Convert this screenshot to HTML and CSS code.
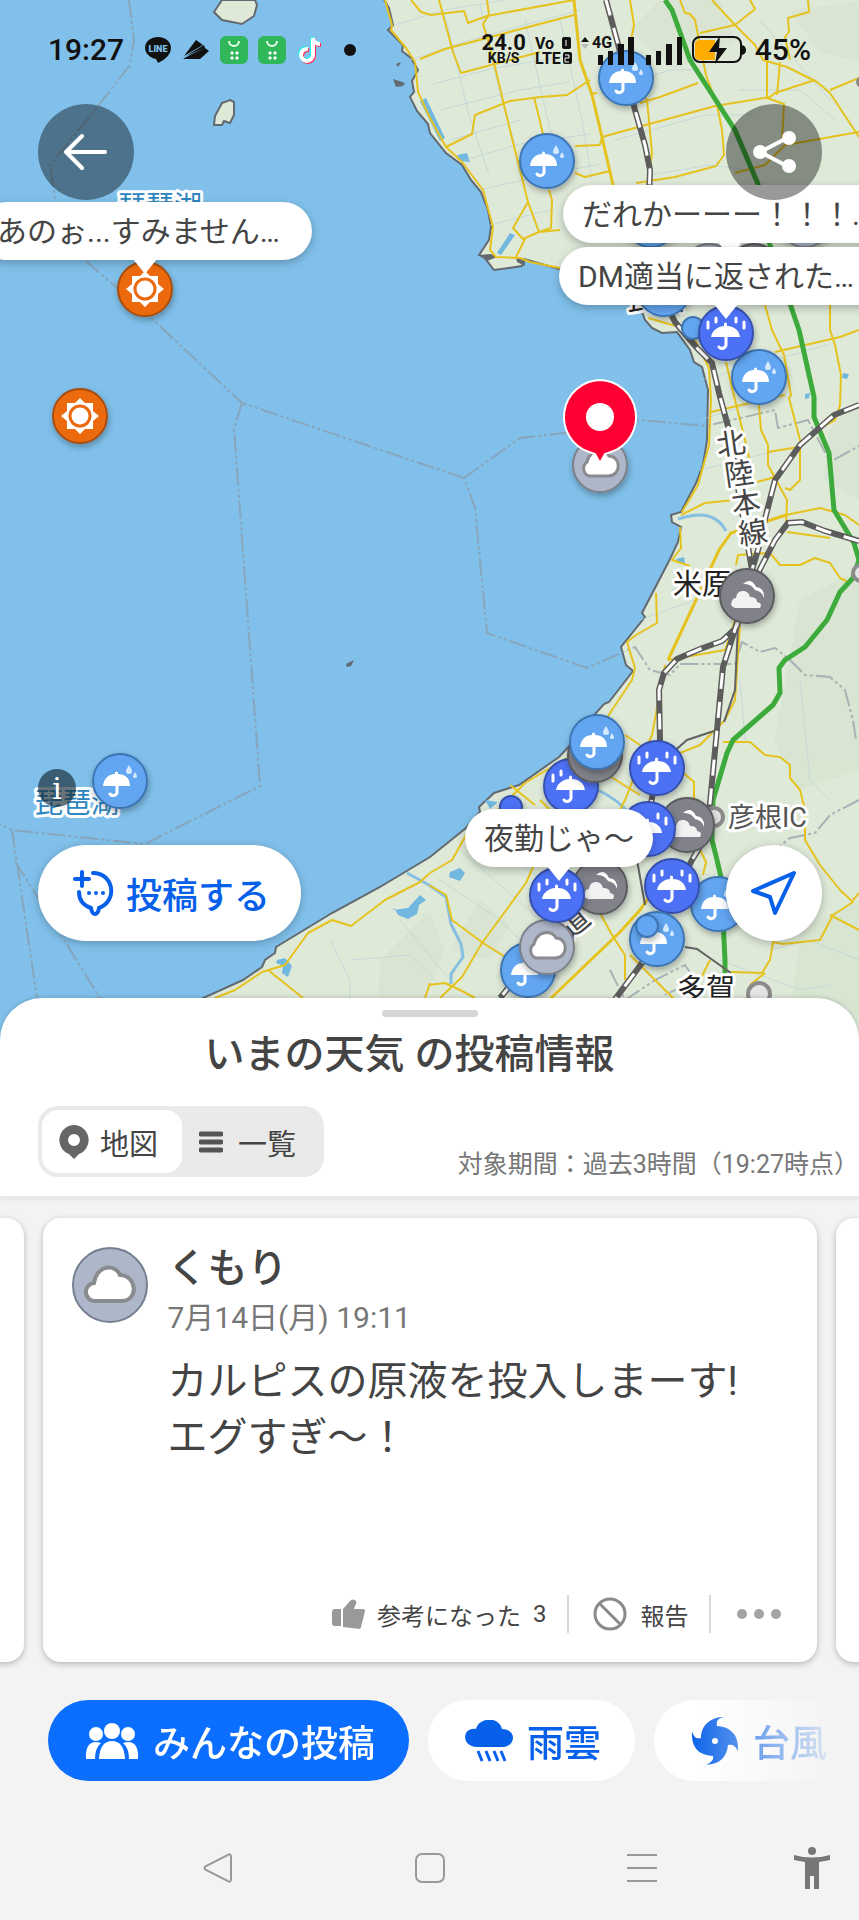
FILE: index.html
```html
<!DOCTYPE html>
<html lang="ja">
<head>
    <meta charset="UTF-8">
    <meta name="viewport" content="width=device-width, initial-scale=1.0">
    <title>いまの天気 の投稿情報</title>
    <link rel="stylesheet" href="styles.css">
</head>

<body>
    <div class="map">
        <svg class="map-canvas" viewBox="0 0 859 1040" preserveAspectRatio="xMidYMin slice" role="img" aria-label="琵琶湖周辺の地図">
            <defs>
                <symbol id="umbrella" viewBox="-29 -29 58 58" overflow="visible">
                    <path d="M-17 5C-16 -3 -11 -7 -5 -7V-8a1.500 1.500 0 0 1 3 0v1C5 -7 10 -3 10 5Z" fill="#fff"/>
                    <path d="M-3 3V12a4 4 0 0 1-7 1" fill="none" stroke="#fff" stroke-width="3" stroke-linecap="round"/>
                    <path d="M9-16q-6 9 0 9t0-9ZM15-9q-4 6 0 6t0-6Z" fill="#d3e9ff"/>
                </symbol>
                <symbol id="heavy" viewBox="-29 -29 58 58" overflow="visible">
                    <path d="M-15 4C-14 -3 -7 -7 -2 -7V-9a1.500 1.500 0 0 1 3 0v2C8 -7 13 -3 14 4Z" fill="#fff"/>
                    <path d="M0 2V12a4 4 0 0 1-7 2M-18-11v6M-10-15v4M10-15v4M18-11v6" fill="none" stroke="#fff" stroke-width="3" stroke-linecap="round"/>
                </symbol>
                <symbol id="cloud" viewBox="-29 -29 58 58" overflow="visible">
                    <path d="M-11 11a8 8 0 0 1-2-14C-10-17 6-17 9-9c12 0 13 20-1 20Z" fill="#fff" stroke="#8a8b8f" stroke-width="3"/>
                </symbol>
                <symbol id="clouds" viewBox="-29 -29 58 58" overflow="visible">
                    <path d="M-4-12Q4-19 9-9Q18-8 17 2Q15-5 8-6Q4-13-4-12Z" fill="#fff"/>
                    <path d="M-12 12q-6-2-3-7q1-3 4-3q1-8 8-7q5 1 6 6q7 0 7 5q6 1 3 6Z" fill="#f2f2f2"/>
                </symbol>
                <symbol id="sun" viewBox="-29 -29 58 58" overflow="visible">
                    <path d="M0-18l5 5h8v8l6 5-6 5v8H5l-5 5-5-5h-8V5l-6-5 6-5v-8h8Z" fill="#fff"/>
                    <circle r="10" fill="#fff" stroke="#ec6b10" stroke-width="3"/>
                </symbol>
                <filter id="shadow" x="-30%" y="-30%" width="160%" height="160%">
                    <feDropShadow dx="1" dy="3" stdDeviation="3" flood-opacity=".3"/>
                </filter>
                <path id="coast" d="M382-4L389 8 393 25 388 30 403 45 402 51 411 58 418 70 412 81 414 92 410 97 417 111 428 124 430 133 446 153 462 165 471 180 481 192 488 210 491 227 489 240 479 255 484 257 494 270 509 268 522 266 524 259 559 269 600 285 640 306 645 320 652 328 662 333 677 332 690 350 694 362 702 367 708 390 707 440 703 465 696 483 681 512 671 515 672 522 681 527 678 542 670 559 642 613 645 617 621 647 626 665 633 671 609 702 604 704 596 713 575 740 559 757 519 785 494 793 479 807 480 812 466 828 430 857 380 887 332 913 276 947 275 953 265 960 262 967 243 980 203 998 150 1044 863 1044 863-4Z"/>
                <path id="rail-main" d="M606 0L618 44 635 110 645 145 650 170 649 200M664 300L675 322 696 347 712 363 719 393 729 430 740 500 752 570"/>
                <path id="rail-hikone" d="M748 590L737 623 723 667 710 803 704 840 692 860 642 963 616 998 590 1040M742 612L736 628 722 641 700 649 677 659 664 673 659 690 660 740 657 768 650 810 600 890 560 925 500 998"/>
                <path id="rail-tokai" d="M859 405L834 415 800 445 775 480 766 515 758 550 752 570M859 541L825 531 802 522 788 523 775 540 757 575"/>
            </defs>

            <rect width="859" height="1040" fill="#80c0ea"/>
            <use href="#coast" fill="#dee9d8" stroke="#626970" stroke-width="2"/>
            <g fill="#d4e2cc" opacity=".5">
                <path d="M630 30l30-30h60l15 40-60 30ZM790 10l69-8v60l-40-10ZM830 430l29-30v100l-35-20ZM800 600l59-30v200l-60 20-25-50 12-60Z"/>
                <path d="M380 960l50-50 14 40-20 50-46 20ZM480 900l30 25-20 35-40-10ZM800 930l59-30v130h-70Z"/>
            </g>
            <g fill="#dee9d8" stroke="#626970" stroke-width="2">
                <path d="M222 0l-8 12 8 8 20 4 12-8 3-11-2-5ZM230 100l4 2v13l-4 8-6-2-2 4h-8l1-9 7-13Z"/>
            </g>
            <path d="M396 64l5-2-3 5ZM393 79l12 4-2 3-7 1ZM346 664l8-4-3 6-4 1ZM479 255l12-1 6 3-10 4ZM516 257l9 2 0 7-8-4Z" fill="#626970"/>

            <!-- ponds and rivers -->
            <path d="M420 101l6-3 19 40-5 3ZM457 155l10-2 3 9-9-1ZM497 253l13-20 5 2-14 20ZM393 910l15-2 12-13 6 5-7 5-2 9-9 5-10-4-4-7ZM277 960l8-2 7 8-4 11-6-4 1-7-7-3ZM450 872l10-4 5 5-5 8-11-4ZM843 373l6 1-2 5-5-1ZM805 394l5-1-1 5-4 1ZM676 559l8-2 1 6-7-1ZM485 800l13 2-8 7Z" fill="#72b7e0"/>
            <g fill="none" stroke="#86bfe0" stroke-width="3">
                <path d="M678 519q22-7 33-2 10 4 15 14M429 885l17 12 5 27 10 20 2 13-12 17v10M407 873l22 12M598 790q20 10 30 22"/>
            </g>
            <g fill="none" stroke="#b6cfda" stroke-width="1" opacity=".6">
                <path d="M395 25l50-15 60-10M410 60l60-20 110-30M430 85l60-16 80-14M440 110l80-20 50-8M450 140l70-20M465 160l55-16 70-10M480 190l60-14 60-12M490 225l60-15M445 15l24 100 20 60M480 5l20 90 15 50M525 20l25 110 12 60M560 20l22 100 10 60M610 90l60-20 30 0M615 140l90-25 50 0M650 175l60-10 40 5M740 90l60 0 35 30M760 20l70 80M700 380l60-16 70-20M700 420l70-22M700 470l80-20M670 590l60-10M640 620l55-20 30-10M570 760l80 40M540 800l60 30M440 880l60 40 60 60M400 920l50 60M350 960l60-5 30 30M330 940l20 40v30M460 850l80 70M470 830l80 55M700 870l60 40M770 950l40-10 49 20M720 960l80 30 30-5M800 680l10 100 20 20M740 680l5 60"/>
            </g>
            <g fill="none" stroke="#8a97a4" stroke-width="2" stroke-dasharray="18 3 3 3 3 3" opacity=".65">
                <path d="M129 0L134 40 130 65 95 110 50 165 55 200 87 262 145 312 182 347 242 403 464 478 475 508 487 633 587 668 635 647 650 670 670 675 680 664 735 664 742 642 760 652 775 648 790 660 805 675 830 677 845 690 853 720 856 740M242 403L234 428 260 786 145 844 12 830 0 824M12 830L37 998M15 861L100 998M464 478L520 438 590 430 640 420 706 426 775 410 778 428 808 420 830 462 859 446M859 800L830 815 815 833 790 838 775 850M610 970l15 30 30-20 30-15 10 15-30 15"/>
            </g>

            <!-- prefectural roads -->
            <g fill="none" stroke="#e6c21f" stroke-width="2" stroke-linejoin="round">
                <path d="M385 0L392 25 391 30 406 48 415 62 418 92 430 118 446 147 462 162 483 190 493 227 490 250 496 257 520 258 530 262 560 268M648 318L690 330 700 350 709 368 711 400 709 445 698 485 682 512M680 527L681 548 672 560 690 566M656 593L657 623 636 635 627 642 635 668 632 680 612 710 590 745 560 762 525 783 500 808 470 828 452 860 430 873"/>
                <path d="M411 0L421 12 431 15 464 11 468 23 487 16 574 0M439 0L453 52 461 73 540 52M487 0L489 15 483 24 488 40 495 67 510 130 528 202 539 232M420 59L445 49 574 15M446 147L472 134 475 115 510 101 540 97 567 95 590 80M534 97L543 134M549 190L552 200 551 228 539 232 523 239 513 228 528 202M602 137L715 106 770 97 775 93 815 80M590 94L597 93M575 146L600 145M575 173L585 177 610 171M525 239L516 257M539 232L560 230"/>
                <path d="M630 0L634 25 629 50 632 80 647 100 652 153 647 185M640 103L660 97 698 83M600 145l2-8M636 183L675 177 716 166 724 155 722 130 717 105 706 75 695 20 690 14 685 13 680 0M735 173L765 165 785 145 859 132M700 33L735 25 755 9 750 0M735 25L712 0M735 25L755 45 763 60 787 67 817 82 830 93 859 137M808 0L809 12 788 18 789 32 785 37 790 60M767 60L767 98 784 104 782 140M780 62L777 95M830 90L859 78"/>
                <path d="M711 412L785 395M772 330L784 355 791 395 789 398 800 440 800 480 790 490 785 488M726 362L735 400 745 440 755 485M775 352L840 337 859 330M830 305L830 330 835 345 841 375 840 405 835 420 820 428M759 405L761 430 768 445 768 465 787 500 786 525M768 452L799 447M757 482L775 477M681 515L705 503 735 500M786 515L820 508 845 515 859 525M787 532L830 538M736 565L738 555 770 553 780 565 800 565 815 558 830 563 840 578 848 582M765 305l7 25"/>
                <path d="M668 660L725 650 735 620M665 665L652 735 645 750 625 800 600 850M740 625L735 700 725 720 700 745 650 765M723 742L750 742 765 755 780 757 790 765 790 778 800 790 805 810 805 840 820 865 840 890 853 902 833 915 820 940 783 944 773 942 770 960 762 973 731 972M853 900L859 893M830 915L859 930M680 770L694 782 694 810M700 850L706 862 703 875M625 735L640 745M600 770L640 795M510 785L535 805M530 815L520 845M540 800L560 820M536 860L526 883 482 943 462 977 440 998M429 885L446 895 452 920 483 943 510 960M429 985L445 983 460 990 475 998M600 913L612 935 625 955 625 980M630 955L675 1000M765 973L750 985M710 960L700 980"/>
                <path d="M215 998L235 990 262 972 285 965 308 933 332 920 351 926 385 900 420 882 430 873M268 970L303 998M430 983L425 998"/>
            </g>
            <g fill="none" stroke="#e6c21f" stroke-width="3">
                <path d="M574 0L580 60 592 95 602 137 613 185M786 515L731 533 719 550 696 600 668 660M675 860L640 910 620 932 549 1000"/>
            </g>

            <!-- expressway -->
            <path d="M665 0L672 10 690 60 735 130 758 184 770 245 799 330 814 397 814 417 829 453 834 510 854 543 859 560 853 578 840 592 827 620 805 647 785 660 779 668 780 693 773 705 733 740 727 753 713 800 712 840 717 860 721 877 725 960 725 990" fill="none" stroke="#3cab3c" stroke-width="5" stroke-linejoin="round"/>
            <path d="M738 625L735 690 724 722M714 731L687 740 670 755M637 860L645 905M685 947L697 949 731 973" fill="none" stroke="#626262" stroke-width="2"/>

            <g fill="none" stroke="#5c5c5c" stroke-width="6">
                <use href="#rail-main"/><use href="#rail-hikone"/><use href="#rail-tokai"/>
            </g>
            <g fill="none" stroke="#fff" stroke-width="3" stroke-dasharray="16 13">
                <use href="#rail-main"/><use href="#rail-hikone"/><use href="#rail-tokai"/>
            </g>

            <g fill="#e4e4e4" stroke="#8b8b8b" stroke-width="4">
                <circle cx="714" cy="817" r="9"/><circle cx="759" cy="994" r="11"/><circle cx="861" cy="573" r="8"/><circle cx="862" cy="82" r="4"/>
            </g>

            <g class="place">
                <text x="673" y="595">米原</text>
                <text x="677" y="1000">多賀</text>
                <text x="626" y="310">長浜</text>
                <text class="place-ic" x="728" y="827">彦根IC</text>
                <text class="place-line" transform="translate(718 456) rotate(-8)">北</text>
                <text class="place-line" transform="translate(726 486) rotate(-8)">陸</text>
                <text class="place-line" transform="translate(733 515) rotate(-8)">本</text>
                <text class="place-line" transform="translate(740 545) rotate(-8)">線</text>
                <text class="place-line" transform="translate(570 940) rotate(-40)">道</text>
                <text class="place-lake" x="118" y="216">琵琶湖</text>
                <text class="place-lake" x="35" y="813">琵琶湖</text>
            </g>

            <!-- weather reports -->
            <g class="pins">
                <g class="pin sunny" transform="translate(145 289)"><circle r="27"/><use href="#sun" x="-29" y="-29" width="58" height="58"/></g>
                <g class="pin sunny" transform="translate(80 416)"><circle r="27"/><use href="#sun" x="-29" y="-29" width="58" height="58"/></g>
                <g class="pin rainy" transform="translate(626 78)"><circle r="27"/><use href="#umbrella" x="-29" y="-29" width="58" height="58"/></g>
                <g class="pin rainy" transform="translate(547 161)"><circle r="27"/><use href="#umbrella" x="-29" y="-29" width="58" height="58"/></g>
                <g class="pin rainy" transform="translate(651 220)"><circle r="27"/></g>
                <g class="pin cloudy" transform="translate(805 220)"><circle r="27"/></g>
                <g class="pin cloudy" transform="translate(709 271)"><circle r="27"/></g>
                <g class="pin overcast" transform="translate(754 271)"><circle r="27"/></g>
                <g class="pin rainy" transform="translate(664 289)"><circle r="27"/><use href="#umbrella" x="-29" y="-29" width="58" height="58"/></g>
                <g class="pin rainy" transform="translate(693 328)"><circle r="11"/></g>
                <g class="pin rainy" transform="translate(759 377)"><circle r="27"/><use href="#umbrella" x="-29" y="-29" width="58" height="58"/></g>
                <g class="pin storm" transform="translate(726 333)"><circle r="27"/><use href="#heavy" x="-29" y="-29" width="58" height="58"/></g>
                <g class="pin cloudy" transform="translate(600 465)"><circle r="27"/><use href="#cloud" x="-29" y="-29" width="58" height="58"/></g>
                <g class="pin overcast" transform="translate(747 596)"><circle r="27"/><use href="#clouds" x="-29" y="-29" width="58" height="58"/></g>
                <g class="pin rainy" transform="translate(120 781)"><circle r="27"/><use href="#umbrella" x="-29" y="-29" width="58" height="58"/></g>
                <g class="pin storm" transform="translate(571 786)"><circle r="27"/><use href="#heavy" x="-29" y="-29" width="58" height="58"/></g>
                <g class="pin overcast" transform="translate(595 755)"><circle r="27"/></g>
                <g class="pin rainy" transform="translate(597 742)"><circle r="27"/><use href="#umbrella" x="-29" y="-29" width="58" height="58"/></g>
                <g class="pin storm" transform="translate(657 768)"><circle r="27"/><use href="#heavy" x="-29" y="-29" width="58" height="58"/></g>
                <g class="pin storm" transform="translate(511 807)"><circle r="11"/></g>
                <g class="pin overcast" transform="translate(687 825)"><circle r="27"/><use href="#clouds" x="-29" y="-29" width="58" height="58"/></g>
                <g class="pin storm" transform="translate(648 829)"><circle r="27"/><use href="#heavy" x="-29" y="-29" width="58" height="58"/></g>
                <g class="pin overcast" transform="translate(600 887)"><circle r="27"/><use href="#clouds" x="-29" y="-29" width="58" height="58"/></g>
                <g class="pin rainy" transform="translate(528 970)"><circle r="27"/><use href="#umbrella" x="-29" y="-29" width="58" height="58"/></g>
                <g class="pin cloudy" transform="translate(547 947)"><circle r="27"/><use href="#cloud" x="-29" y="-29" width="58" height="58"/></g>
                <g class="pin storm" transform="translate(557 895)"><circle r="27"/><use href="#heavy" x="-29" y="-29" width="58" height="58"/></g>
                <g class="pin rainy" transform="translate(718 904)"><circle r="27"/><use href="#umbrella" x="-29" y="-29" width="58" height="58"/></g>
                <g class="pin storm" transform="translate(672 886)"><circle r="27"/><use href="#heavy" x="-29" y="-29" width="58" height="58"/></g>
                <g class="pin rainy" transform="translate(657 939)"><circle r="27"/><use href="#umbrella" x="-29" y="-29" width="58" height="58"/></g>
                <g class="pin rainy" transform="translate(647 926)"><circle r="11"/></g>
            </g>

            <!-- selected point -->
            <path d="M600 380a37 37 0 0 1 11 72l-6 2-5 9-5-9-6-2a37 37 0 0 1 11-72Z" fill="#ff0033" stroke="#fff" stroke-width="2"/>
            <circle cx="600" cy="417" r="14" fill="#fff"/>
        </svg>

        <div class="bubble bubble-anoo">あのぉ...すみません…</div>
        <div class="bubble bubble-dareka">だれかーーー！！！...</div>
        <div class="bubble bubble-dm">DM適当に返された…</div>
        <div class="bubble bubble-yakin">夜勤じゃ～</div>

        <div class="status-bar">
            <div class="status-left">
                <span class="clock">19:27</span>
                <svg width="28" height="28" viewBox="0 0 28 28" aria-label="LINE"><path d="M14 1C6 1 1 6 1 12c0 5 5 10 11 11l2 4q13-6 13-15C27 6 22 1 14 1Z" fill="#111"/><text x="14" y="16" class="line-logo">LINE</text></svg>
                <svg width="28" height="28" viewBox="0 0 28 28"><path d="M2 20L14 4l7 5ZM4 20L22 9l1 3ZM1 23L8 19 23 12l4 3-9 8Z" fill="#111"/></svg>
                <svg width="28" height="28" viewBox="0 0 28 28"><rect width="28" height="28" rx="6" fill="#30b75a"/><path d="M9 5a5 5 0 0 0 10 0" fill="none" stroke="#e8ffe9" stroke-width="2"/><path d="M11 16h2v2h-2ZM16 16h2v2h-2ZM11 21h2v2h-2ZM16 21h2v2h-2Z" fill="#fff" stroke="#fff"/></svg>
                <svg width="28" height="28" viewBox="0 0 28 28"><rect width="28" height="28" rx="6" fill="#30b75a"/><path d="M9 5a5 5 0 0 0 10 0" fill="none" stroke="#e8ffe9" stroke-width="2"/><path d="M11 16h2v2h-2ZM16 16h2v2h-2ZM11 21h2v2h-2ZM16 21h2v2h-2Z" fill="#fff" stroke="#fff"/></svg>
                <svg width="28" height="28" viewBox="0 0 28 28" fill="none" stroke-width="4"><path d="M12 13a6 6 0 1 0 5 6V2q1 6 7 6" stroke="#ff2c55" transform="translate(1 1)"/><path d="M12 13a6 6 0 1 0 5 6V2q1 6 7 6" stroke="#25f4ee" transform="translate(-1 -1)"/><path d="M12 13a6 6 0 1 0 5 6V2q1 6 7 6" stroke="#fff"/></svg>
                <span class="more-dot"></span>
            </div>
            <div class="status-right">
                <span class="stack"><b>24.0</b><small>KB/S</small></span>
                <svg width="37" height="30" viewBox="0 0 37 30" class="sim"><text x="0" y="14">Vo</text><text x="0" y="29">LTE</text><rect x="27" y="2" width="9" height="12" rx="2"/><rect x="28" y="17" width="9" height="12" rx="2"/><path d="M31 5v6M30 20h4v3h-4v4h4" fill="none" stroke="#fff"/></svg>
                <svg width="102" height="30" viewBox="0 0 102 30" class="signal"><path d="M0 7l4-5 4 5Z"/><path d="M0 9l4 5 4-5Z" fill="#b5bdb5"/><text x="11" y="13">4G</text><path d="M17 20h5v10h-5ZM27 16h5v14h-5ZM37 9h6v21h-6ZM47 2h6v28h-6ZM65 20h5v10h-5ZM75 16h5v14h-5ZM85 9h6v21h-6ZM96 2h5v28h-5Z"/></svg>
                <svg width="54" height="28" viewBox="0 0 54 28"><rect x="1" y="1" width="48" height="25" rx="7" fill="none" stroke="#111" stroke-width="2"/><path d="M8 4h15v20H8q-5 0-5-4V8q0-4 5-4Z" fill="#ffab00"/><path d="M50 9q4 1 4 5t-4 5ZM28 0L17 16h8l-2 12 12-16h-8Z" fill="#111"/></svg>
                <span class="clock">45%</span>
            </div>
        </div>

        <button class="round-button back" aria-label="戻る"><svg width="44" height="38" viewBox="0 0 44 38"><path d="M41 19H3M18 3L2 19l16 16" fill="none" stroke="#fff" stroke-width="4" stroke-linecap="round" stroke-linejoin="round"/></svg></button>
        <button class="round-button share" aria-label="共有"><svg width="44" height="44" viewBox="0 0 44 44"><path d="M37 7L8 22l29 15" fill="none" stroke="#fff" stroke-width="4"/><g fill="#fff"><circle cx="37" cy="8" r="7"/><circle cx="8" cy="22" r="7"/><circle cx="37" cy="36" r="7"/></g></svg></button>
        <button class="info" aria-label="情報">i</button>
        <div class="map-actions">
            <button class="post-button">
                <svg width="42" height="46" viewBox="0 0 42 46" fill="none" stroke="#0660e9" stroke-width="4" stroke-linecap="round" stroke-linejoin="round"><path d="M9 2v14M2 9h14M20 3c21 0 25 28 6 35q-1 6-4 6t-4-6C9 35 6 29 6 22"/><path d="M16 23h0M23 23h0M30 23h0"/></svg>
                投稿する
            </button>
            <button class="round-button locate" aria-label="現在地"><svg width="46" height="46" viewBox="0 0 46 46"><path d="M43 3L2 21l17 6 5 16Z" fill="none" stroke="#0660e9" stroke-width="4" stroke-linejoin="round"/></svg></button>
        </div>
    </div>

    <div class="sheet">
        <div class="handle"></div>
        <h1>いまの天気 の投稿情報</h1>
        <div class="sheet-tools">
            <div class="switch">
                <button class="active"><svg width="30" height="34" viewBox="0 0 30 34"><path fill-rule="evenodd" d="M15 0a15 15 0 0 1 5 29l-5 5-5-5A15 15 0 0 1 15 0Zm0 9a6 6 0 1 0 0 12 6 6 0 0 0 0-12Z" fill="#666"/></svg>地図</button>
                <button class="list"><svg width="24" height="22" viewBox="0 0 24 22"><path d="M2 3h20M2 11h20M2 19h20" stroke="#555" stroke-width="5" stroke-linecap="round"/></svg>一覧</button>
            </div>
            <p class="period">対象期間：過去3時間（19:27時点）</p>
        </div>
    </div>

    <div class="carousel">
        <div class="card"></div>
        <div class="card">
            <svg class="card-icon" width="76" height="76" viewBox="0 0 76 76"><circle cx="38" cy="38" r="37" fill="#aeb6c9" stroke="#74808f" stroke-width="2"/><path d="M24 54a9 9 0 0 1-2-18C25 17 44 17 48 28c18 1 18 26 2 26Z" fill="#fff" stroke="#8a8b8f" stroke-width="4"/></svg>
            <div class="card-body">
                <h2>くもり</h2>
                <p class="date">7月14日(月) 19:11</p>
                <p class="comment">カルピスの原液を投入しまーす!<br>エグすぎ～！</p>
            </div>
            <div class="card-actions">
                <button class="like"><svg width="33" height="30" viewBox="0 0 33 30" fill="#999"><path d="M3 10h6v17H3q-3 0-3-3V13q0-3 3-3ZM11 10l7-8q3-3 6 0 1 2-1 5l-1 3h9q2 0 2 2l-4 16-1 2-17-2Z"/></svg>参考になった <span>3</span></button>
                <button class="report"><svg width="34" height="34" viewBox="0 0 34 34"><path d="M6 6l22 22" stroke="#8a8a8a" stroke-width="3"/><circle cx="17" cy="17" r="15" fill="none" stroke="#8a8a8a" stroke-width="3"/></svg>報告</button>
                <button class="more" aria-label="その他"><svg width="44" height="10" viewBox="0 0 44 10" fill="#a3a3a3"><circle cx="5" cy="5" r="5"/><circle cx="22" cy="5" r="5"/><circle cx="39" cy="5" r="5"/></svg></button>
            </div>
        </div>
        <div class="card"></div>
    </div>

    <div class="chips">
        <button class="chip selected">
            <svg width="54" height="36" viewBox="0 0 54 36" fill="#fff"><ellipse cx="11" cy="11" rx="7" ry="7"/><ellipse cx="43" cy="11" rx="7" ry="7"/><ellipse cx="27" cy="8" rx="8" ry="8"/><path d="M1 36q-1-16 9-17 3 0 6 1-6 5-6 16ZM53 36q1-16-9-17-3 0-6 1 6 5 6 16ZM14 36q1-18 13-18t13 18Z"/></svg>
            みんなの投稿
        </button>
        <button class="chip">
            <svg width="48" height="42" viewBox="0 0 48 42"><path d="M11 27C-4 26-3 7 11 9 14-3 34-4 37 9c15 0 14 17 1 18Z" fill="#0660e9"/><path d="M13 31l4 10M21 31l4 10M29 31l4 10M36 31l4 10" stroke="#0660e9" stroke-width="3"/></svg>
            雨雲
        </button>
        <button class="chip">
            <svg width="48" height="48" viewBox="0 0 48 48"><path fill-rule="evenodd" d="M33 0c-6 1-8 4-7 9 14 1 22 9 21 25-3-6-6-7-10-6-1 12-8 19-22 20 6-3 8-6 7-9C8 38 0 31 1 14c2 7 5 8 9 7C10 8 20 0 33 0ZM24 21a3 3 0 1 0 0 6 3 3 0 0 0 0-6Z" fill="#0660e9"/></svg>
            台風
        </button>
    </div>

    <div class="nav-bar">
        <button aria-label="戻る"><svg width="30" height="30" viewBox="0 0 30 30"><path d="M25 2Q28 0 28 4V26q0 4-3 2L3 17q-3-2 0-4Z"/></svg></button>
        <button aria-label="ホーム"><svg width="30" height="30" viewBox="0 0 30 30"><rect x="1" y="1" width="28" height="28" rx="6"/></svg></button>
        <button aria-label="履歴"><svg width="30" height="30" viewBox="0 0 30 30"><path d="M0 2h30M0 15h30M0 28h30"/></svg></button>
        <button class="accessibility" aria-label="ユーザー補助"><svg width="38" height="42" viewBox="0 0 38 42"><circle cx="19" cy="4" r="4"/><path d="M1 8q18 5 36 0v5l-11 2v27h-5V29h-4v13h-5V15L1 13Z"/></svg></button>
    </div>
</body>
</html>
```
FILE: styles.css
```css
*{
    box-sizing: border-box;
    font-family: Roboto, "Noto Sans CJK JP", sans-serif;
}

body{
    margin: 0;
    background-color: #f3f3f3;
    color: #444;
    overflow-x: hidden;
}

h1, h2, p{
    margin: 0;
}

button{
    border: none;
    background: none;
    padding: 0;
    color: inherit;
    display: flex;
    align-items: center;
    justify-content: center;
    cursor: pointer;
}

svg{
    flex-shrink: 0;
}

/* map */
.map{
    position: relative;
    height: 1040px;
    overflow: hidden;
    background-color: #80c0ea;
}

.map-canvas{
    display: block;
    width: 100%;
    height: 100%;
}

.place text{
    font-size: 29px;
    fill: #222;
    stroke: #fff;
    stroke-width: 6px;
    stroke-linejoin: round;
    paint-order: stroke;
}

.place .place-ic{
    font-size: 27px;
    fill: #555;
}

.place .place-line{
    fill: #444;
}

.place .place-lake{
    font-size: 28px;
    fill: #2d86c0;
}

.pin{
    filter: url(#shadow);
}

.pin > circle{
    stroke-width: 2px;
}

.sunny > circle{
    fill: #ec6b10;
    stroke: #a84e10;
}

.rainy > circle{
    fill: #62a5f0;
    stroke: #3d74b3;
}

.storm > circle{
    fill: #4d71f5;
    stroke: #3450ad;
}

.cloudy > circle{
    fill: #aeb6c9;
    stroke: #7b8088;
}

.overcast > circle{
    fill: #818289;
    stroke: #5a5b60;
}

.bubble{
    position: absolute;
    max-width: 334px;
    height: 58px;
    padding: 0 19px;
    border-radius: 29px;
    background-color: #fff;
    font-size: 30px;
    line-height: 60px;
    white-space: nowrap;
    box-shadow: 0 3px 8px rgba(0, 0, 0, .25);
}

.bubble::after{
    content: "";
    position: absolute;
    left: 50%;
    top: 57px;
    margin-left: -12px;
    border: 12px solid transparent;
    border-top: 15px solid #fff;
    border-bottom: none;
}

.bubble-anoo, .bubble-dareka, .bubble-dm{
    width: 334px;
}

.bubble-anoo{
    left: -22px;
    top: 202px;
}

.bubble-dareka{
    left: 563px;
    top: 185px;
}

.bubble-dm{
    left: 559px;
    top: 247px;
}

.bubble-yakin{
    left: 465px;
    top: 809px;
}

/* status bar */
.status-bar{
    position: absolute;
    top: 30px;
    left: 0;
    right: 0;
    height: 40px;
    padding: 0 48px;
    display: flex;
    align-items: center;
    justify-content: space-between;
    color: #111;
}

.status-left, .status-right{
    display: flex;
    align-items: center;
    gap: 10px;
}

.status-right{
    gap: 9px;
}

.clock{
    font-size: 30px;
    line-height: 36px;
    font-weight: 500;
}

.status-left .clock{
    margin-right: 10px;
}

.line-logo{
    font-size: 9px;
    font-weight: 900;
    fill: #80c0ea;
    text-anchor: middle;
}

.more-dot{
    width: 12px;
    height: 12px;
    margin-left: 10px;
    border-radius: 50%;
    background-color: #111;
}

.stack{
    display: flex;
    flex-direction: column;
    align-items: center;
}

.stack b{
    font-size: 22px;
    line-height: 16px;
}

.stack small{
    font-size: 14px;
    line-height: 14px;
    font-weight: 700;
}

.sim text, .signal text{
    font-size: 16px;
    font-weight: 700;
}

.sim, .signal{
    fill: #111;
}

/* buttons on the map */
.round-button{
    width: 96px;
    height: 96px;
    border-radius: 50%;
}

.back, .share{
    position: absolute;
    top: 104px;
    background-color: rgba(0, 0, 0, .4);
}

.back{
    left: 38px;
}

.share{
    right: 37px;
}

.info{
    position: absolute;
    left: 38px;
    top: 769px;
    width: 38px;
    height: 38px;
    border-radius: 50%;
    background-color: rgba(20, 40, 50, .65);
    color: #fff;
    font: 400 30px "DejaVu Serif", serif;
}

.map-actions{
    position: absolute;
    left: 38px;
    right: 37px;
    bottom: 99px;
    display: flex;
    justify-content: space-between;
}

.post-button, .locate{
    background-color: #fff;
    box-shadow: 0 2px 8px rgba(0, 0, 0, .25);
}

.post-button{
    height: 96px;
    padding: 0 31px 0 35px;
    gap: 11px;
    border-radius: 48px;
    color: #0660e9;
    font-size: 36px;
    font-weight: 500;
}

/* bottom sheet */
.sheet{
    position: relative;
    margin-top: -42px;
    padding-top: 12px;
    background-color: #fff;
    border-radius: 42px 42px 0 0;
    border-bottom: 3px solid #e9e9e9;
    box-shadow: 0 -1px 4px rgba(0, 0, 0, .15);
}

.handle{
    width: 96px;
    height: 7px;
    margin: 0 auto;
    border-radius: 4px;
    background-color: #d6d6d6;
}

h1{
    padding-right: 40px;
    font-size: 40px;
    line-height: 76px;
    font-weight: 500;
    text-align: center;
}

.sheet-tools{
    display: flex;
    align-items: flex-end;
    justify-content: space-between;
    padding: 13px 0 19px 38px;
}

.switch{
    display: flex;
    padding: 4px;
    border-radius: 20px;
    background-color: #eaeaea;
}

.switch button{
    height: 63px;
    padding: 0 24px 0 17px;
    gap: 11px;
    border-radius: 16px;
    font-size: 29px;
}

.switch .active{
    background-color: #fff;
}

.switch .list{
    gap: 15px;
}

.period{
    color: #777;
    font-size: 25px;
    line-height: 24px;
}

/* report cards */
.carousel{
    display: flex;
    justify-content: center;
    gap: 19px;
    padding: 19px 0 38px;
    overflow: hidden;
}

.card{
    display: flex;
    flex-wrap: wrap;
    flex-shrink: 0;
    align-content: space-between;
    gap: 0 20px;
    width: calc(100% - 85px);
    min-height: 444px;
    padding: 29px;
    border-radius: 18px;
    background-color: #fff;
    box-shadow: 0 2px 6px rgba(0, 0, 0, .25);
}

.card-body{
    flex: 1;
}

h2{
    font-size: 40px;
    line-height: 44px;
    font-weight: 500;
}

.date{
    margin-top: 6px;
    color: #777;
    font-size: 30px;
    line-height: 42px;
}

.comment{
    margin-top: 15px;
    font-size: 40px;
    line-height: 56px;
}

.card-actions{
    display: flex;
    justify-content: flex-end;
    width: 100%;
    padding-right: 7px;
}

.card-actions button{
    height: 38px;
    gap: 14px;
    font-size: 24px;
}

.like, .report{
    padding-right: 20px;
    border-right: 2px solid #d8d8d8;
}

.card-actions .like{
    gap: 12px;
}

.report{
    padding-left: 24px;
}

.more{
    padding-left: 26px;
}

/* mode chips */
.chips{
    display: flex;
    gap: 19px;
    padding-left: 48px;
    overflow: hidden;
    -webkit-mask-image: linear-gradient(to right, #000 80%, transparent 98%);
    mask-image: linear-gradient(to right, #000 80%, transparent 98%);
}

.chip{
    flex-shrink: 0;
    height: 81px;
    gap: 14px;
    padding: 0 34px 0 37px;
    border-radius: 41px;
    background-color: #fff;
    color: #0660e9;
    font-size: 37px;
    font-weight: 500;
}

.selected{
    background-color: #0b6eff;
    color: #fff;
}

/* system navigation */
.nav-bar{
    position: relative;
    display: flex;
    justify-content: center;
    gap: 182px;
    padding: 72px 0 37px;
}

.nav-bar svg{
    fill: none;
    stroke: #999;
    stroke-width: 2px;
}

.nav-bar .accessibility{
    position: absolute;
    right: 28px;
    top: 66px;
}

.nav-bar .accessibility svg{
    fill: #777;
    stroke: none;
}
```
